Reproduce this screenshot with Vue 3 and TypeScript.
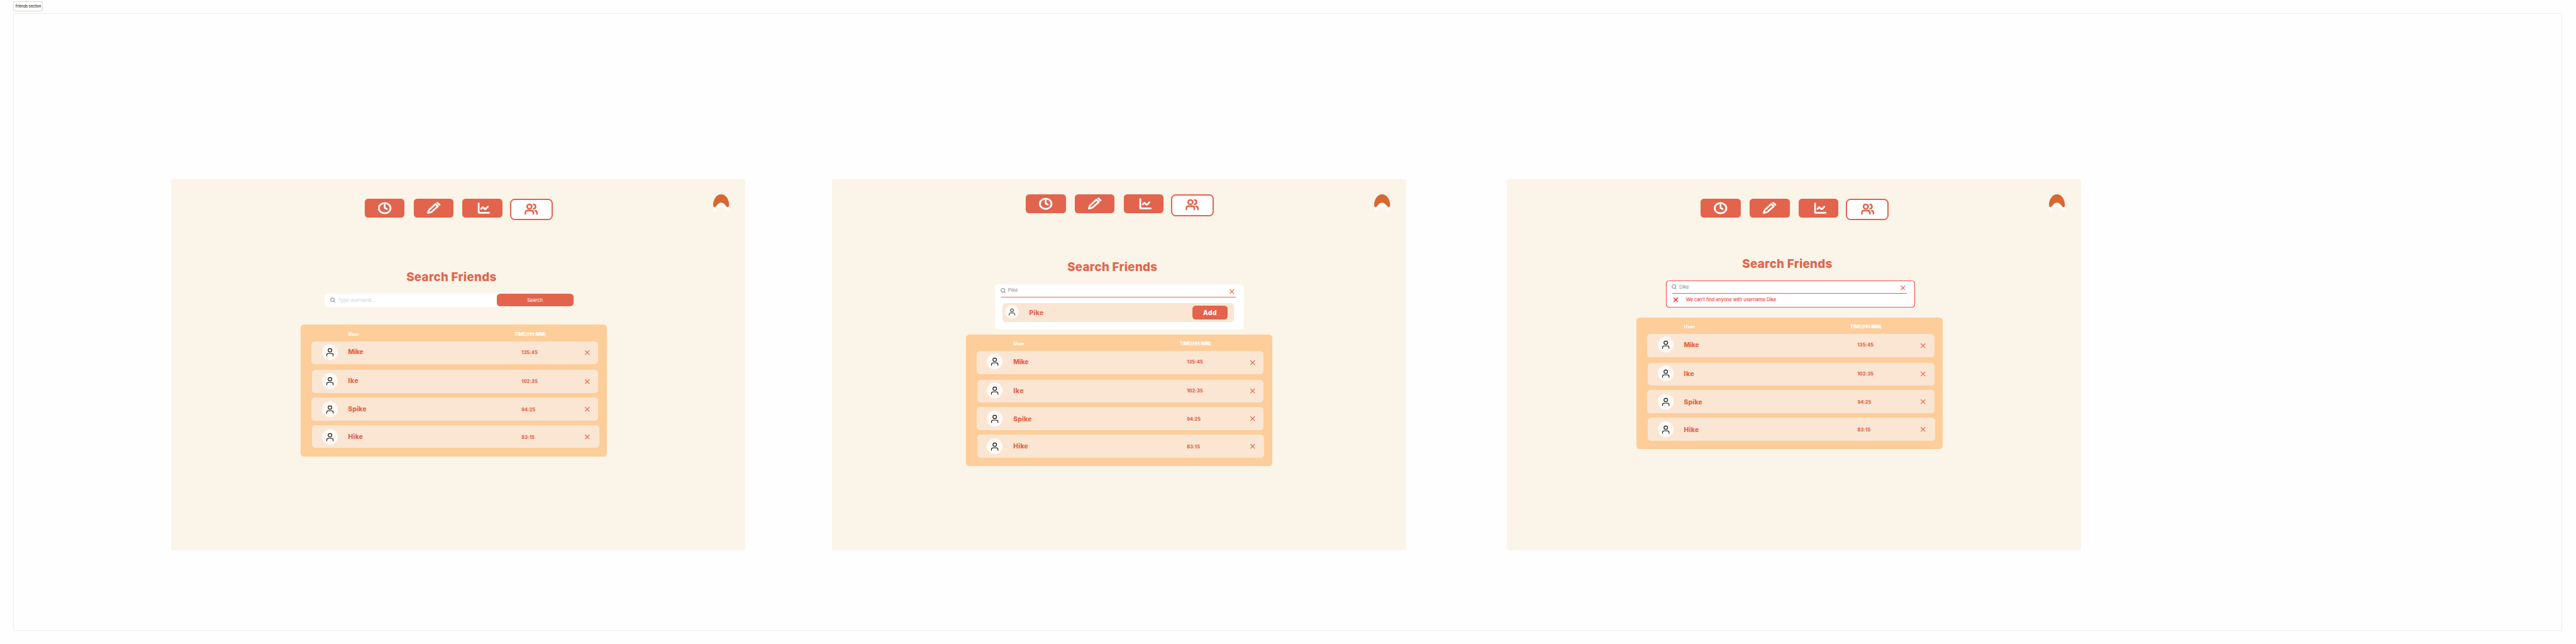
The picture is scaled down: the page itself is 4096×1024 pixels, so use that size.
<script setup lang="ts">
type SearchState = 'idle' | 'found' | 'missing'

interface Screen {
  state: SearchState
  query: string
  panelGap: number
  navLeft: number
  navTop: number
  titleGap: number
  searchLeft: number
  searchGap: number
  tableLeft: number
  tableGap: number
}

const screens: Screen[] = [
  { state: 'idle', query: '', panelGap: 472, navLeft: 583, navTop: 58, titleGap: 145, searchLeft: 462, searchGap: 29, tableLeft: 390, tableGap: 54 },
  { state: 'found', query: 'Pike', panelGap: 260, navLeft: 584, navTop: 46, titleGap: 115, searchLeft: 491, searchGap: 31, tableLeft: 403, tableGap: 17 },
  { state: 'missing', query: 'Dike', panelGap: 302, navLeft: 584, navTop: 58, titleGap: 104, searchLeft: 480, searchGap: 31, tableLeft: 390, tableGap: 29 },
]

interface Friend {
  name: string
  nameWidth: number
  time: string
  timeWidth: number
  gap: number
  inset: number
  width: number
  lead: number
  drop: number
}

const friends: Friend[] = [
  { name: 'Mike', nameWidth: 44.4, time: '135:45', timeWidth: 47.4, gap: 0, inset: 32, width: 864, lead: 8, drop: 0 },
  { name: 'Ike', nameWidth: 29, time: '102:35', timeWidth: 47.4, gap: 17, inset: 34, width: 862, lead: 9, drop: 0 },
  { name: 'Spike', nameWidth: 54, time: '94:25', timeWidth: 40.2, gap: 14, inset: 32, width: 864, lead: 11, drop: 0 },
  { name: 'Hike', nameWidth: 43, time: '83:15', timeWidth: 38.2, gap: 14, inset: 34, width: 864, lead: 11, drop: 1 },
]

const ctx = document.createElement('canvas').getContext('2d')

// Letter spacing that makes a string's ink span the given width.
function track(text: string, size: number, weight: number, width: number) {
  if (!ctx) return {}
  ctx.font = `${weight} 200px Inter`
  const m = ctx.measureText(text)
  const ink = ((m.actualBoundingBoxLeft + m.actualBoundingBoxRight) * size) / 200
  return { letterSpacing: `${((width - ink) / (text.length - 1)).toFixed(3)}px` }
}
const px = (n: number) => `${n}px`
</script>

<template>
  <div class="board">
    <div class="label"><span :style="track('friends section', 11, 400, 76.4)">friends section</span></div>
    <div class="section">
      <main v-for="s in screens" :key="s.state" class="panel" :style="{ marginLeft: px(s.panelGap) }">
        <header class="header">
          <nav class="nav" :style="{ marginLeft: px(s.navLeft), marginTop: px(s.navTop) }">
            <button class="tab">
              <svg viewBox="0 0 120 57" width="120" height="57">
                <ellipse cx="60" cy="28.4" rx="17.5" ry="15.5" />
                <path d="M60 18.9V27.4L66.6 31" />
              </svg>
            </button>
            <button class="tab">
              <svg viewBox="0 0 120 57" width="120" height="57">
                <path d="M64.9 16.2L72.6 22.8L52.7 40.2L42.5 43L45.3 34Z" />
                <path d="M70.7 12.2L77.5 18.2" />
              </svg>
            </button>
            <button class="tab">
              <svg viewBox="0 0 120 57" width="120" height="57">
                <path d="M49.4 14.6V42.3H80.8" />
                <path d="M56.9 30.4L61.6 25.6L69 31.6L77 24" />
              </svg>
            </button>
            <button class="tab active">
              <svg viewBox="0 0 120 57" width="120" height="57">
                <ellipse cx="54.5" cy="19.7" rx="7" ry="6.6" />
                <path d="M67 13.2C75 14.4 75 25 67 26.2" />
                <path d="M42.5 41.5V38C42.5 34 44.5 31.9 48.4 31.9H60.6C64.5 31.9 66.5 34 66.5 38V41.5" />
                <path d="M72 32.2C75.4 33 77.2 35 77.2 38.4V41.5" />
              </svg>
            </button>
          </nav>
          <svg class="logo" viewBox="0 0 48 51" width="48" height="51">
            <path fill="#fff" transform="translate(0 12)" d="M0 33C0 14 11 0 24 0S48 14 48 33C48 36 45.5 38.6 43 38.6C39.5 38.6 34 25 24 25S8.5 38.6 4.5 38.6C2 38.6 0 36 0 33Z" />
            <path fill="#d96732" d="M0 33C0 14 11 0 24 0S48 14 48 33C48 36 45.5 38.6 43 38.6C39.5 38.6 34 25 24 25S8.5 38.6 4.5 38.6C2 38.6 0 36 0 33Z" />
          </svg>
        </header>

        <h1 class="title" :style="{ marginTop: px(s.titleGap), ...track('Search Friends', 35.5, 800, 268.4) }">Search Friends</h1>

        <section class="search" :class="s.state" :style="{ marginLeft: px(s.searchLeft), marginTop: px(s.searchGap) }">
          <div class="field">
            <svg class="glass" viewBox="0 0 16 16" width="16" height="16">
              <circle cx="6.8" cy="6.8" r="5.6" />
              <path d="M11 11L13.8 13.8" />
            </svg>
            <span v-if="s.state === 'idle'" class="placeholder" :style="track('Type username...', 14, 400, 111.7)">Type username...</span>
            <span v-else class="query" :style="track(s.query, 14, 400, 27.5)">{{ s.query }}</span>
            <button v-if="s.state === 'idle'" class="submit"><span :style="track('Search', 14, 400, 45.4)">Search</span></button>
            <svg v-else class="cross clear" viewBox="0 0 14 14" width="14" height="14"><path d="M.5.5L13.5 13.5M13.5.5L.5 13.5" /></svg>
          </div>
          <div v-if="s.state === 'found'" class="result">
            <svg class="avatar small" viewBox="0 0 48 48" width="42" height="41" preserveAspectRatio="none">
              <ellipse class="disc" cx="24" cy="24" rx="24" ry="24" />
              <ellipse cx="24" cy="18.5" rx="5.5" ry="5" />
              <path d="M14.3 35.6V33C14.3 30 16.2 28 19.3 28H28.7C31.8 28 33.7 30 33.7 33V35.6" />
            </svg>
            <span class="found-name" :style="track('Pike', 19.5, 800, 41)">Pike</span>
            <button class="add"><span :style="track('Add', 19, 800, 39)">Add</span></button>
          </div>
          <div v-if="s.state === 'missing'" class="error">
            <svg class="cross bad" viewBox="0 0 14 14" width="14" height="14"><path d="M.5.5L13.5 13.5M13.5.5L.5 13.5" /></svg>
            <span :style="track('We can’t find anyone with username Dike', 14, 400, 271)">We can’t find anyone with username Dike</span>
          </div>
        </section>

        <section class="table" :style="{ marginLeft: px(s.tableLeft), marginTop: px(s.tableGap) }">
          <div class="head">
            <span class="col-user" :style="track('User', 13.5, 800, 32)">User</span>
            <span :style="track('TIME(HH:MM)', 13.5, 800, 92.7)">TIME(HH:MM)</span>
          </div>
          <div
            v-for="f in friends"
            :key="f.name"
            class="row"
            :style="{ marginTop: px(f.gap), marginLeft: px(f.inset), width: px(f.width), paddingLeft: px(64 - f.inset), paddingRight: px(f.inset + f.width - 870) }"
          >
            <div class="who" :style="{ marginTop: px(f.lead) }">
              <svg class="avatar" viewBox="0 0 48 48" width="48" height="48">
                <ellipse class="disc" cx="24" cy="24" rx="24" ry="24" />
                <ellipse cx="24" cy="19" rx="5.5" ry="5" />
                <path d="M14.3 35.8V33.4C14.3 30.4 16.2 28.4 19.3 28.4H28.7C31.8 28.4 33.7 30.4 33.7 33.4V35.8" />
              </svg>
              <span class="name" :style="track(f.name, 19.5, 800, f.nameWidth)">{{ f.name }}</span>
              <span class="time" :style="{ paddingTop: px(f.drop * 2), ...track(f.time, 13.7, 800, f.timeWidth) }">{{ f.time }}</span>
            </div>
            <svg class="cross" viewBox="0 0 14 14" width="14" height="14"><path d="M.5.5L13.5 13.5M13.5.5L.5 13.5" /></svg>
          </div>
        </section>
      </main>
    </div>
  </div>
</template>

<style>
body {
  margin: 0;
  background: #fff;
  overflow: hidden;
}
</style>

<style scoped>
.board {
  zoom: 0.528653;
  width: 7748px;
  height: 1937px;
  overflow: hidden;
  display: flex;
  flex-direction: column;
  align-items: flex-start;
  background: #fefefe;
  font-family: Inter, "Liberation Sans", sans-serif;
}
.board * {
  box-sizing: border-box;
}
button {
  flex: none;
  border: 0;
  padding: 0;
  margin: 0;
  font: inherit;
  display: flex;
  align-items: center;
  justify-content: center;
}
svg {
  display: block;
  flex: none;
  overflow: visible;
  fill: none;
  stroke-linecap: round;
  stroke-linejoin: round;
}
span {
  white-space: nowrap;
}
.label {
  margin: 4px 0 0 40px;
  width: 89px;
  height: 30px;
  padding-left: 5px;
  border: 1px solid #dadada;
  border-radius: 2px;
  font-size: 11px;
  line-height: 27px;
  color: #000;
}
.section {
  margin: 6px 0 0 40px;
  width: 7667px;
  height: 1857px;
  border: 1px solid #ececec;
  border-radius: 2px;
  padding-top: 497px;
  display: flex;
  align-items: flex-start;
}
.panel {
  flex: none;
  width: 1728px;
  height: 1117px;
  border-radius: 5px;
  background: #fbf4e8;
  display: flex;
  flex-direction: column;
  align-items: flex-start;
}
.header {
  width: 1679px;
  height: 130px;
  display: flex;
  justify-content: space-between;
  align-items: flex-start;
}
.nav {
  display: flex;
  align-items: flex-start;
  gap: 27px;
}
.tab {
  width: 120px;
  height: 57px;
  border-radius: 10px;
  background: #e2644c;
  stroke: #fff;
  stroke-width: 5.3;
}
.tab.active {
  width: 128px;
  height: 65px;
  margin-left: -4px;
  border: 4px solid #e2644c;
  border-radius: 14px;
  background: #fff;
  stroke: #e2644c;
  stroke-width: 4.8;
}
.logo {
  margin-top: 46px;
}
.title {
  margin: 0 0 0 708.5px;
  height: 40px;
  line-height: 40px;
  font-size: 35.5px;
  font-weight: 800;
  color: #e2644c;
  white-space: nowrap;
}
.search {
  width: 749px;
  border-radius: 10px;
  background: #fff;
}
.search.idle {
  height: 40px;
}
.search.found {
  height: 134px;
}
.search.missing {
  height: 82px;
  box-shadow: inset 0 0 0 1.6px #f21a1a;
}
.field {
  height: 40px;
  display: flex;
  align-items: center;
  font-size: 14px;
  font-weight: 400;
}
.found .field,
.missing .field {
  width: 706px;
  margin-left: 18px;
  border-bottom: 1px solid #e2644c;
}
.glass {
  margin-left: 17px;
  stroke: #8a8f9a;
  stroke-width: 1.9;
}
.found .glass,
.missing .glass {
  margin-left: -1px;
}
.placeholder {
  margin-left: 8px;
  color: #cbd3df;
}
.query {
  margin-left: 6px;
  color: #868b94;
}
.submit {
  margin: 0 0 1px auto;
  width: 231px;
  height: 39px;
  border-radius: 10px;
  background: #e2644c;
  color: #fff;
  font-size: 14px;
  font-weight: 400;
}
.cross {
  stroke: #e2644c;
  stroke-width: 2.1;
  stroke-linecap: butt;
}
.clear {
  margin: 6px 5px 0 auto;
}
.cross.bad {
  stroke: #f01414;
  stroke-width: 2.4;
}
.result {
  width: 695px;
  height: 57px;
  margin: 17px 0 0 23px;
  padding: 0 18px 0 7px;
  border-radius: 10px;
  background: #fae6d3;
  display: flex;
  align-items: center;
}
.result .small {
  margin-top: -4px;
}
.found-name {
  margin-left: 31px;
  font-size: 19.5px;
  font-weight: 800;
  color: #e2644c;
}
.add {
  margin-left: auto;
  width: 107px;
  height: 41px;
  border-radius: 10px;
  background: #e2644c;
  color: #fff;
  font-size: 19px;
  font-weight: 800;
}
.error {
  margin-left: 21px;
  height: 35px;
  display: flex;
  align-items: center;
  gap: 24px;
  font-size: 14px;
  color: #f01414;
}
.table {
  width: 921px;
  height: 396px;
  border-radius: 10px;
  background: #fdcd9a;
}
.head {
  height: 50px;
  padding-top: 20px;
  display: flex;
  font-size: 13.5px;
  font-weight: 800;
  line-height: 20px;
  color: #fff;
}
.col-user {
  width: 500px;
  margin-left: 143.5px;
}
.row {
  height: 69px;
  border-radius: 10px;
  background: #fae6d3;
  display: flex;
  align-items: center;
}
.who {
  flex: 1;
  align-self: flex-start;
  height: 48px;
  display: flex;
  align-items: center;
}
.avatar {
  stroke: #0a0a0a;
  stroke-width: 2;
}
.avatar .disc {
  fill: #fdf9f4;
  stroke: none;
}
.name {
  width: 522px;
  margin-left: 31px;
  font-size: 19.5px;
  font-weight: 800;
  line-height: 24px;
  color: #e2644c;
}
.time {
  margin-top: 3px;
  font-size: 13.7px;
  font-weight: 800;
  line-height: 18px;
  color: #e2644c;
}
</style>
